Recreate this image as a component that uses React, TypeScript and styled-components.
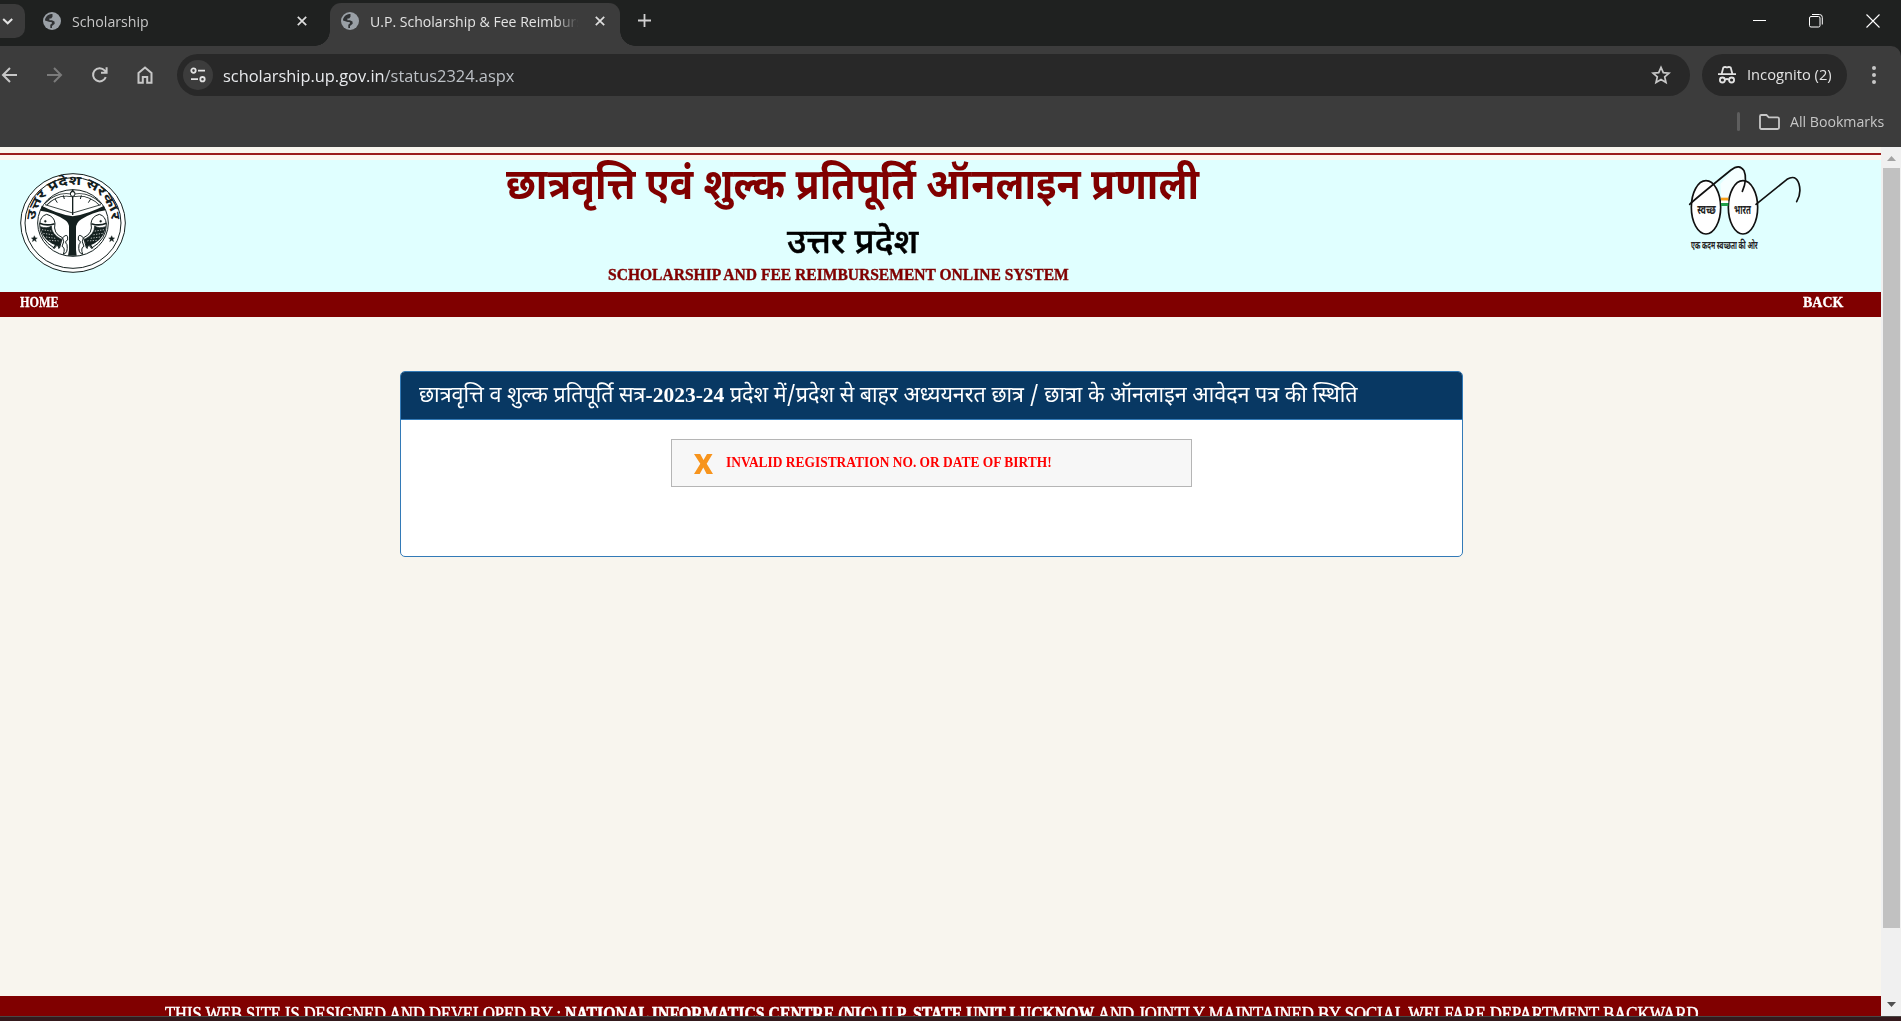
import React, { useLayoutEffect, useRef, useState } from "react";
import styled, { createGlobalStyle } from "styled-components";

const UI = `"Open Sans", "Noto Sans", sans-serif`;
const DISPLAY = `"Liberation Serif", "Noto Sans", serif`;
const HINDI = `"Noto Sans Devanagari", "Noto Sans", "Liberation Sans", sans-serif`;

const GlobalStyle = createGlobalStyle`
  * { box-sizing: border-box; }
  html, body { margin: 0; padding: 0; overflow: hidden; background: #3c3c3c; }
`;

/* ---------- text fitted to a fixed measure ---------- */
const FitBox = styled.span<{ $w: number }>`
  display: block;
  flex: none;
  width: ${(p) => p.$w}px;
  white-space: nowrap;
`;
const FitInner = styled.span`
  display: inline-block;
  transform-origin: 0 50%;
  white-space: pre;
`;
function Fit({ w, children }: { w: number; children: React.ReactNode }) {
  const ref = useRef<HTMLSpanElement>(null);
  const [k, setK] = useState(1);
  useLayoutEffect(() => {
    const measure = () => {
      if (ref.current) setK(w / ref.current.offsetWidth);
    };
    measure();
    document.fonts?.ready.then(measure);
  }, [w]);
  return (
    <FitBox $w={w}>
      <FitInner ref={ref} style={{ transform: `scaleX(${k})` }}>
        {children}
      </FitInner>
    </FitBox>
  );
}

/* ---------- browser chrome ---------- */
const Screen = styled.div`
  width: 1901px;
  height: 1021px;
  display: flex;
  flex-direction: column;
  overflow: hidden;
  font-family: ${UI};
`;
const TabStrip = styled.div`
  height: 46px;
  flex: none;
  display: flex;
  background: #1f2120;
  color: #c7c7c7;
  font-size: 14px;
`;
const TabSearch = styled.div`
  width: 25px;
  height: 34px;
  margin-top: 4px;
  padding: 11px 0 0 1px;
  background: #3b3b3b;
  border-radius: 0 10px 10px 0;
  svg { display: block; }
`;
const Tab = styled.div<{ $active?: boolean }>`
  position: relative;
  width: ${(p) => (p.$active ? 290 : 305)}px;
  height: 43px;
  margin-top: 3px;
  padding: 0 ${(p) => (p.$active ? 15 : 23)}px 7px ${(p) => (p.$active ? 11 : 18)}px;
  display: flex;
  align-items: center;
  gap: 10px;
  color: ${(p) => (p.$active ? "#e3e3e3" : "#c7c7c7")};
  background: ${(p) => (p.$active ? "#3c3c3c" : "transparent")};
  border-radius: 11px 11px 0 0;
  ${(p) =>
    p.$active &&
    `
    &::before, &::after {
      content: ""; position: absolute; bottom: 0; width: 15px; height: 15px;
    }
    &::before { left: -15px; background: radial-gradient(circle at 0 0, transparent 14.5px, #3c3c3c 15px); }
    &::after { right: -15px; background: radial-gradient(circle at 100% 0, transparent 14.5px, #3c3c3c 15px); }
  `}
`;
const TabLabel = styled.div<{ $fade?: boolean }>`
  flex: 1;
  overflow: hidden;
  padding: 2px 0 0 1px;
  line-height: 22px;
  ${(p) => p.$fade && `mask-image: linear-gradient(90deg, #000 86%, transparent 97%);`}
`;
const NewTab = styled.div`
  padding: 14px 0 0 18px;
  svg { display: block; }
`;
const WindowButtons = styled.div`
  margin-left: auto;
  padding: 14px 21px 0 0;
  display: flex;
  align-items: flex-start;
  gap: 43px;
  svg { display: block; }
`;
const ToolbarBack = styled.div`
  flex: none;
  background: #1f2120;
`;
const Toolbar = styled.div`
  height: 101px;
  background: #3c3c3c;
  border-radius: 0 10px 0 0;
  display: flex;
  flex-direction: column;
`;
const AddressRow = styled.div`
  height: 58px;
  padding: 0 22px 0 1px;
  display: flex;
  align-items: center;
  svg { display: block; flex: none; }
`;
const NavIcons = styled.div`
  width: 176px;
  flex: none;
  display: flex;
  gap: 27px;
`;
const Omnibox = styled.div`
  width: 1513px;
  flex: none;
  height: 42px;
  padding: 0 19px 0 6px;
  border-radius: 21px;
  background: #282828;
  display: flex;
  align-items: center;
  font-size: 17px;
  color: #e8eaed;
`;
const SiteChip = styled.div`
  width: 30px;
  height: 30px;
  margin-right: 10px;
  border-radius: 50%;
  background: #3c3c3c;
  display: grid;
  place-items: center;
`;
const UrlPath = styled.span`
  color: #bdc1c6;
`;
const Grow = styled.div`
  flex: 1;
`;
const Incognito = styled.div`
  width: 145px;
  flex: none;
  height: 42px;
  margin: 0 22px 0 12px;
  padding: 0 0 1px 15px;
  border-radius: 21px;
  background: #282828;
  color: #e3e3e3;
  font-size: 14px;
  display: flex;
  align-items: center;
  gap: 10px;
`;
const BookmarkRow = styled.div`
  height: 35px;
  padding-right: 17px;
  display: flex;
  align-items: center;
  justify-content: flex-end;
  color: #c7c7c7;
  font-size: 14px;
`;
const BookmarkDivider = styled.div`
  width: 3px;
  height: 19px;
  margin-right: 19px;
  border-radius: 2px;
  background: #5e5e5e;
`;
const FolderBox = styled.div`
  width: 31px;
  svg { display: block; }
`;

/* ---------- page ---------- */
const Viewport = styled.div`
  height: 869px;
  flex: none;
  display: flex;
  overflow: hidden;
`;
const Page = styled.div`
  width: 1881px;
  display: flex;
  flex-direction: column;
  background: #f8f5ee;
`;
const TopRule = styled.div`
  flex: none;
  height: 13px;
  padding-top: 6px;
  &::after {
    content: "";
    display: block;
    height: 7px;
    border-top: 2px solid #9b1c1c;
    background: #fdf5ef;
  }
`;
const Header = styled.header`
  flex: none;
  height: 132px;
  padding: 0 80px 0 20px;
  display: flex;
  background: #e0ffff;
`;
const EmblemBox = styled.div`
  width: 106px;
  padding-top: 13px;
  margin-right: 380px;
`;
const Titles = styled.div`
  width: 693px;
  display: flex;
  flex-direction: column;
  align-items: center;
`;
const Title = styled.h1`
  margin: 0;
  height: 64px;
  padding-top: 1px;
  font: 700 43px/56px ${HINDI};
  color: #800000;
`;
const State = styled.h2`
  margin: 0;
  height: 38px;
  font: 500 34px/43px ${HINDI};
  color: #000;
  -webkit-text-stroke: 0.5px #000;
`;
const English = styled.p`
  margin: 0;
  padding-right: 28px;
  font: 700 17px/26px ${DISPLAY};
  color: #800000;
  -webkit-text-stroke: 0.4px #800000;
`;
const MissionBox = styled.div`
  margin-left: auto;
  padding-top: 4px;
`;
const Menu = styled.nav`
  flex: none;
  height: 25px;
  padding: 0 38px 0 20px;
  display: flex;
  justify-content: space-between;
  background: #800000;
  color: #fff;
  font: 700 15px/20px ${DISPLAY};
  -webkit-text-stroke: 0.3px #fff;
`;
const Main = styled.main`
  flex: 1;
  padding: 54px 0 0 400px;
`;
const Card = styled.section`
  width: 1063px;
  height: 186px;
  border: 1px solid #337ab7;
  border-radius: 5px;
  overflow: hidden;
  background: #fff;
  display: flex;
  flex-direction: column;
  align-items: center;
`;
const CardTitle = styled.h3`
  margin: 0;
  width: 100%;
  height: 48px;
  flex: none;
  padding-left: 18px;
  border-bottom: 1px solid #337ab7;
  background: #083863;
  color: #fff;
  font: 400 22px/45px ${HINDI};
`;
const Session = styled.b`
  font: 700 22px/45px ${DISPLAY};
`;
const Alert = styled.div`
  width: 521px;
  height: 48px;
  margin-top: 19px;
  padding-left: 22px;
  border: 1px solid #b5b5b5;
  background: #f7f7f7;
  color: #ff0000;
  display: flex;
  gap: 13px;
  font: 700 15px/44px ${DISPLAY};
  svg { margin-top: 14px; flex: none; }
`;
const Footer = styled.footer`
  flex: none;
  height: 20px;
  overflow: hidden;
  padding: 6px 0 0 165px;
  background: #800000;
  color: #fff;
  font: 400 18px/24px ${DISPLAY};
  -webkit-text-stroke: 0.5px #fff;
  display: flex;
  gap: 4px;
`;
const Scrollbar = styled.div`
  width: 20px;
  padding: 9px 1px 0 2px;
  background: #f0f0f0;
  display: flex;
  flex-direction: column;
  align-items: center;
  svg { display: block; }
`;
const Thumb = styled.div`
  width: 17px;
  height: 760px;
  margin-top: 7px;
  background: #c1c1c1;
`;
const Taskbar = styled.div`
  flex: 1;
  border-top: 1px solid #4a4644;
  background: #34191c;
`;

/* ---------- drawings ---------- */
const Globe = () => (
  <svg width="18" height="18" viewBox="0 0 18 18">
    <circle cx="9" cy="9" r="9" fill="#9aa0a6" />
    <path d="M8.2 2.1C5 2.4 2.2 5 2 8.4l3.9 1.3c1 .3 1.8.4 2.8.3l.2 1.6-1.6 1.2v3.1c.6.2 1.1.2 1.7.2V14l2.7-2.2-.2-2.4-2.6-1.1H6.4V6.6h1.8l1.3-1.8V2.1Z" fill="#303234" />
    <path d="M13 3.3c2 1.4 3 3.4 3 5.7-.1 2.600-1.300 4.700-3.200 5.900l.3-2.700 1-1.700-.9-2.500-2.600-.7V5.800l1.700-.6Z" fill="#9aa0a6" />
  </svg>
);
const Cross = () => (
  <svg width="10" height="10" viewBox="0 0 10 10">
    <path d="M.8.8l8.400 8.400M9.200.8L.8 9.200" stroke="#dedede" strokeWidth="1.700" />
  </svg>
);
const stroke = { fill: "none", stroke: "#c7c7c7", strokeWidth: 2 } as const;

const Emblem = () => (
  <svg width="106" height="100" viewBox="0 0 318 300" preserveAspectRatio="none">
    <defs>
      <path id="arc" d="M46 146C46 84 96 35 159 35S274 84 274 146" />
    </defs>
    <ellipse cx="159" cy="150" rx="157" ry="148" fill="#fff" stroke="#14201f" strokeWidth="3" />
    <ellipse cx="159" cy="150" rx="144" ry="136" fill="none" stroke="#14201f" strokeWidth="3" />
    <ellipse cx="159" cy="150" rx="106" ry="100" fill="none" stroke="#14201f" strokeWidth="3" />
    <text fontFamily={HINDI} fontSize="38" fontWeight="700" fill="#14201f">
      <textPath href="#arc" startOffset="4" textLength="345" lengthAdjust="spacingAndGlyphs">उत्तर प्रदेश सरकार</textPath>
    </text>
    <g fill="none" stroke="#14201f">
      <path d="M77 94Q112 58 158 68Q204 58 241 94" strokeWidth="10" />
      <path d="M77 94Q112 58 158 68Q204 58 241 94" strokeWidth="5" stroke="#fff" />
      <path d="M75 95L158 120L243 95" strokeWidth="2.500" />
      <path d="M158 56V126M151 61l7-9 7 9" strokeWidth="4" />
      <path d="M105 78l7 11M130 67l3 11M184 67l-3 11M212 78l-7 11" strokeWidth="3" />
      <circle cx="158" cy="63" r="7" fill="#fff" strokeWidth="3" />
    </g>
    <path d="M65 98L61 113Q105 119 136 142Q148 151 147 165V232L144 248H170L168 230V166Q168 149 184 139Q217 118 257 112L252 98Q207 122 158 130Q110 122 65 98Z" fill="#14201f" />
    {[1, -1].map((d) => (
      <g key={d} transform={d === 1 ? undefined : "translate(318 0) scale(-1 1)"} stroke="#14201f">
        <path d="M59 153Q61 129 80 124Q103 130 105 151Q98 181 127 194L119 224Q110 211 104 226Q58 199 59 153Z" fill="#fff" strokeWidth="3" />
        <path d="M61 161Q82 168 94 159Q94 184 124 199L118 219Q69 207 61 161Z" fill="#14201f" strokeWidth="2" />
        <path d="M66 170l32 5M70 181l32 5M78 192l29 4M88 202l28 2" stroke="#fff" strokeWidth="2" strokeDasharray="4 4" />
        <path d="M59 151Q80 160 104 152" fill="none" strokeWidth="5" />
        <circle cx="76" cy="145" r="3" fill="#14201f" />
        <path d="M128 194Q145 177 143 201Q132 205 141 215Q145 240 130 244Q137 224 126 220Q135 206 128 194Z" fill="#fff" strokeWidth="3" />
        <path d="M114 205l-14 21M120 203l-4 24" fill="none" strokeWidth="4" />
        <path d="M43 188l3 6 6 1-5 4 2 7-6-4-6 4 2-7-5-4 6-1Z" fill="#14201f" />
      </g>
    ))}
  </svg>
);

const Glasses = () => (
  <svg width="114" height="96" viewBox="0 0 342 288">
    <path d="M100 60L134 22Q160 -2 173 20L178 50Q136 50 124 110H104Z" fill="#fff" opacity="0.700" />
    <g stroke="#111" strokeWidth="5" strokeLinecap="round">
      <ellipse cx="57" cy="130" rx="44" ry="80" fill="#fff" />
      <ellipse cx="168" cy="130" rx="44" ry="80" fill="#fff" />
      <path d="M8 121Q16 112 132 18Q157 -2 171 20Q182 46 166 82" fill="none" />
      <path d="M207 121L300 46Q326 30 336 60Q344 88 329 113" fill="none" />
    </g>
    <rect x="102" y="101" width="22" height="9" fill="#f7a11a" />
    <rect x="102" y="110" width="22" height="7" fill="#fff" />
    <rect x="102" y="117" width="22" height="9" fill="#1fa04a" />
    <g fontFamily={HINDI} fontWeight="700" fill="#222">
      <text x="31" y="149" fontSize="40" textLength="55" lengthAdjust="spacingAndGlyphs">स्वच्छ</text>
      <text x="141" y="149" fontSize="40" textLength="51" lengthAdjust="spacingAndGlyphs">भारत</text>
      <text transform="translate(12 254) scale(1 1.300)" fontSize="27" textLength="200" lengthAdjust="spacingAndGlyphs">एक कदम स्वच्छता की ओर</text>
    </g>
  </svg>
);

export default function App() {
  return (
    <Screen>
      <GlobalStyle />
      <TabStrip>
        <TabSearch>
          <svg width="14" height="12" viewBox="0 0 14 12">
            <path d="M2.200 4L6.700 8.300L11.200 4" fill="none" stroke="#e3e3e3" strokeWidth="2" />
          </svg>
        </TabSearch>
        <Tab>
          <Globe />
          <TabLabel><Fit w={77}>Scholarship</Fit></TabLabel>
          <Cross />
        </Tab>
        <Tab $active>
          <Globe />
          <TabLabel $fade><Fit w={213}>U.P. Scholarship &amp; Fee Reimburs</Fit></TabLabel>
          <Cross />
        </Tab>
        <NewTab>
          <svg width="13" height="13" viewBox="0 0 13 13"><path d="M6.500 0V13M0 6.500H13" stroke="#d0d0d0" strokeWidth="1.800" /></svg>
        </NewTab>
        <WindowButtons>
          <svg width="13" height="14"><path d="M0 6.500H13" stroke="#fff" strokeWidth="1" /></svg>
          <svg width="14" height="14" viewBox="0 0 14 14" fill="none" stroke="#fff">
            <rect x=".5" y="2.500" width="10.500" height="10.500" rx="1.500" />
            <path d="M3 .5H10.500Q13.300.5 13.300 3.300V10.500" />
          </svg>
          <svg width="14" height="14" viewBox="0 0 14 14"><path d="M.5.5L13.500 13.500M13.500.5L.5 13.500" stroke="#fff" strokeWidth="1.100" /></svg>
        </WindowButtons>
      </TabStrip>

      <ToolbarBack>
        <Toolbar>
          <AddressRow>
            <NavIcons>
              <svg width="18" height="18" viewBox="0 0 18 18" {...stroke}><path d="M16 9H2.500M9 2L2 9l7 7" /></svg>
              <svg width="18" height="18" viewBox="0 0 18 18" {...stroke} stroke="#7b7b7b"><path d="M1 9H14.500M8 2l7 7-7 7" /></svg>
              <svg width="18" height="18" viewBox="0 0 18 18" {...stroke}><path d="M14.800 11.200A6.600 6.600 0 1 1 13.600 4.400L15.300 6.200M15.600 1.200V6.700H10" /></svg>
              <svg width="18" height="18" viewBox="0 0 18 18" {...stroke}><path d="M2.500 7L9 1.600L15.500 7V16.800H11.200V11H6.800V16.800H2.500Z" /></svg>
            </NavIcons>
            <Omnibox>
              <SiteChip>
                <svg width="16" height="16" viewBox="0 0 16 16" fill="none" stroke="#e3e3e3" strokeWidth="1.800">
                  <circle cx="3.500" cy="3.600" r="2.200" /><path d="M8 3.600H15M1 12.200H8" /><circle cx="12.500" cy="12.200" r="2.200" />
                </svg>
              </SiteChip>
              <Fit w={291}>scholarship.up.gov.in<UrlPath>/status2324.aspx</UrlPath></Fit>
              <Grow />
              <svg width="20" height="20" viewBox="0 0 20 20" fill="none" stroke="#c7c7c7" strokeWidth="1.700">
                <path d="M10 2.300L12.300 7.600L18 8.100L13.700 11.900L15 17.500L10 14.500L5 17.500L6.300 11.900L2 8.100L7.700 7.600Z" />
              </svg>
            </Omnibox>
            <Incognito>
              <svg width="20" height="20" viewBox="0 0 20 20" fill="none" stroke="#e3e3e3" strokeWidth="1.800">
                <path d="M1 9.200H19M4.600 9L6.300 2.500Q8 1.500 10 2.500Q12 1.500 13.700 2.500L15.400 9" />
                <circle cx="5.400" cy="15" r="2.500" /><circle cx="14.600" cy="15" r="2.500" /><path d="M7.900 14.600Q10 13.400 12.100 14.600" />
              </svg>
              <Fit w={85}>Incognito (2)</Fit>
            </Incognito>
            <svg width="10" height="20" viewBox="0 0 10 20" fill="#c7c7c7"><circle cx="5" cy="3" r="2" /><circle cx="5" cy="10" r="2" /><circle cx="5" cy="17" r="2" /></svg>
          </AddressRow>
          <BookmarkRow>
            <BookmarkDivider />
            <FolderBox>
              <svg width="21" height="16" viewBox="0 0 21 16" {...stroke} strokeWidth={1.800}><path d="M1 2.300Q1 1 2.300 1H7.500L9.800 3.300H18.500Q20 3.300 20 4.700V13.500Q20 15 18.500 15H2.500Q1 15 1 13.500Z" /></svg>
            </FolderBox>
            <Fit w={94}>All Bookmarks</Fit>
          </BookmarkRow>
        </Toolbar>
      </ToolbarBack>

      <Viewport>
        <Page>
          <TopRule />
          <Header>
            <EmblemBox><Emblem /></EmblemBox>
            <Titles>
              <Title><Fit w={693}>छात्रवृत्ति एवं शुल्क प्रतिपूर्ति ऑनलाइन प्रणाली</Fit></Title>
              <State><Fit w={131}>उत्तर प्रदेश</Fit></State>
              <English><Fit w={461}>SCHOLARSHIP AND FEE REIMBURSEMENT ONLINE SYSTEM</Fit></English>
            </Titles>
            <MissionBox><Glasses /></MissionBox>
          </Header>
          <Menu>
            <Fit w={39}>HOME</Fit>
            <Fit w={40}>BACK</Fit>
          </Menu>
          <Main>
            <Card>
              <CardTitle>
                <Fit w={938}>छात्रवृत्ति व शुल्क प्रतिपूर्ति सत्र<Session>-2023-24</Session> प्रदेश में/प्रदेश से बाहर अध्ययनरत छात्र / छात्रा के ऑनलाइन आवेदन पत्र की स्थिति</Fit>
              </CardTitle>
              <Alert>
                <svg width="19" height="20" viewBox="0 0 19 20"><path d="M0 0H6.200L9.500 6L13 0H18.500L12.700 9.700L19 20H12.700L9.300 13.500L5.700 20H0L6.300 9.700Z" fill="#f7941d" /></svg>
                <Fit w={326}>INVALID REGISTRATION NO. OR DATE OF BIRTH!</Fit>
              </Alert>
            </Card>
          </Main>
          <Footer>
            <Fit w={396}>THIS WEB SITE IS DESIGNED AND DEVELOPED BY :</Fit>
            <Fit w={529}><b>NATIONAL INFORMATICS CENTRE (NIC) U.P. STATE UNIT LUCKNOW</b></Fit>
            <Fit w={601}>AND JOINTLY MAINTAINED BY SOCIAL WELFARE DEPARTMENT BACKWARD</Fit>
          </Footer>
        </Page>
        <Scrollbar>
          <svg width="9" height="5" viewBox="0 0 9 5"><path d="M4.500 0L9 5H0Z" fill="#a3a3a3" /></svg>
          <Thumb />
          <Grow />
          <svg width="9" height="16" viewBox="0 0 9 16"><path d="M0 2H9L4.500 7Z" fill="#505050" /></svg>
        </Scrollbar>
      </Viewport>
      <Taskbar />
    </Screen>
  );
}
